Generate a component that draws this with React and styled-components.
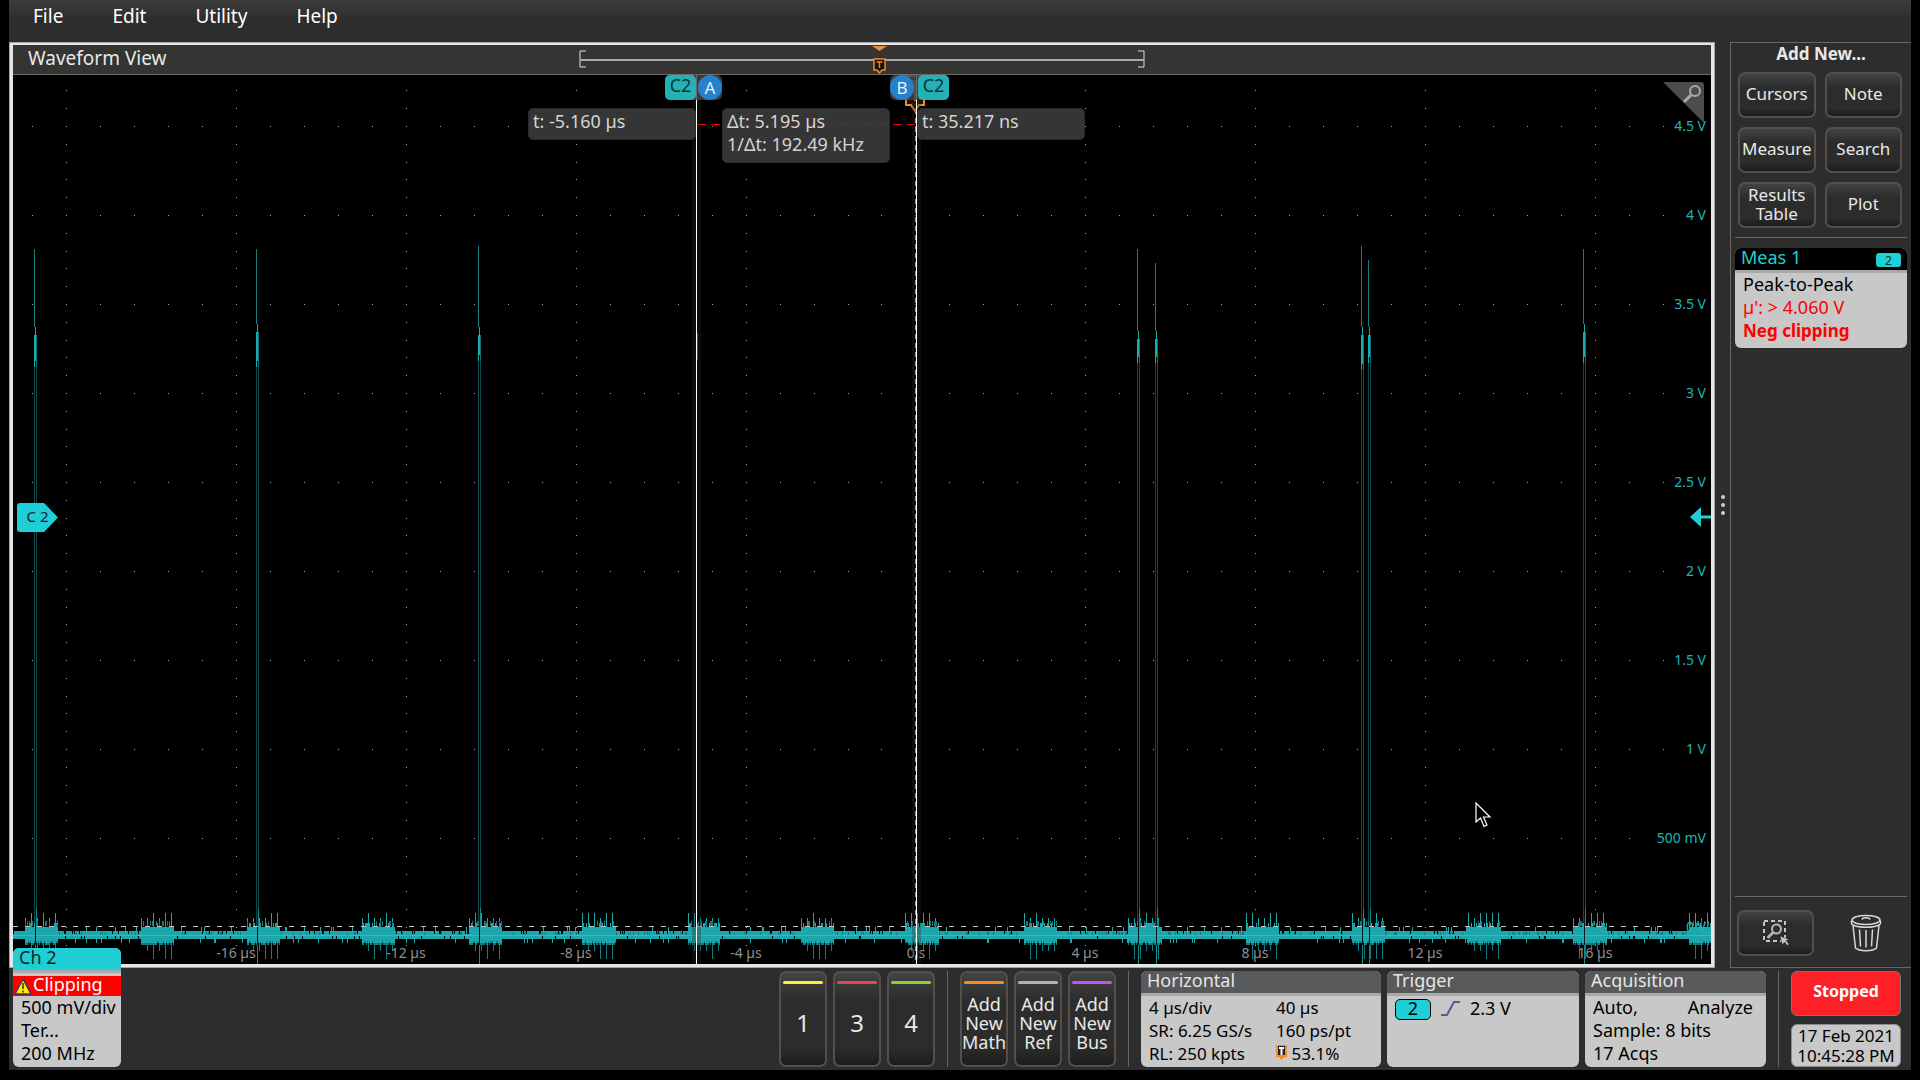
import { Fragment } from 'react';
import styled, { createGlobalStyle } from 'styled-components';

const GlobalStyle = createGlobalStyle`
  * {
    box-sizing: border-box;
  }

  body {
    margin: 0;
    background: #000;
    color: #e8e8e8;
    font-family: 'Noto Sans', 'Open Sans', sans-serif;
    font-size: 18px;
  }

  button {
    font: inherit;
    color: inherit;
    margin: 0;
    padding: 0;
    border: none;
    background: none;
    cursor: pointer;
  }
`;

const TEAL = '#1fb3b7';
const CYAN = '#20cfd5';
const ORANGE = '#f58a1f';

/* ---------- page ---------- */

const Screen = styled.div`
  min-height: 100vh;
  padding: 0 9px 10px;
  display: flex;
  background: #000;
`;

const Scope = styled.div`
  flex: 1;
  min-width: 0;
  display: flex;
  flex-direction: column;
  background: #2d2d2d;
`;

const MenuBar = styled.nav`
  height: 42px;
  padding-left: 24px;
  display: flex;
  align-items: flex-start;
  gap: 49px;
  background: linear-gradient(#3c3c3c, #2d2d2d 20px);
`;

const MenuItem = styled.button`
  color: #fff;
  font-size: 19px;
  line-height: 32px;
`;

const Middle = styled.main`
  flex: 1;
  display: flex;
`;

/* ---------- waveform view ---------- */

const ViewFrame = styled.section`
  flex: 1;
  min-width: 0;
  display: flex;
  flex-direction: column;
  border: 1px solid #a4a4a6;
  padding: 2px 3px 3px;
  background: #e6e6e8;
`;

const TitleBar = styled.header`
  height: 30px;
  padding: 0 15px;
  display: grid;
  grid-template-columns: 1fr auto 1fr;
  background: #343432;
  border-bottom: 1px solid #6c6c6a;
`;

const ViewTitle = styled.h1`
  margin: 0;
  font-size: 19px;
  font-weight: 400;
  line-height: 26px;
`;

const Plot = styled.div`
  flex: 1;
  position: relative;
  overflow: hidden;
  background: #000;
`;

const Trace = styled.svg`
  position: absolute;
  inset: 0;
  width: 100%;
  height: 100%;
`;

const VoltLabel = styled.span`
  position: absolute;
  right: 5px;
  color: ${TEAL};
  font-size: 14px;
  line-height: 20px;
  margin-top: -10px;
`;

const TimeLabel = styled.span`
  position: absolute;
  bottom: 1px;
  width: 80px;
  margin-left: -40px;
  text-align: center;
  color: #909090;
  font-size: 14px;
  line-height: 20px;
`;

const ChannelHandle = styled.div`
  position: absolute;
  left: 4px;
  width: 41px;
  height: 29px;
  margin-top: -15px;
  text-align: center;
  color: #06282a;
  font-size: 15px;
  line-height: 27px;
  background: ${CYAN};
  border-radius: 3px;
  clip-path: polygon(0 0, 66% 0, 100% 50%, 66% 100%, 0 100%);
`;

const LevelArrow = styled.svg`
  position: absolute;
  right: 0;
  margin-top: -10px;
`;

const CornerZoom = styled.button`
  position: absolute;
  top: 7px;
  right: 7px;
  width: 41px;
  height: 41px;
  display: flex;
`;

const TriggerMarker = styled.svg`
  position: absolute;
  top: 0;
  margin-left: -11px;
`;

const CursorLine = styled.div`
  position: absolute;
  top: 0;
  bottom: 0;
  width: 1px;
  background: #fff;
  box-shadow: 0 0 0 4px rgba(40, 40, 40, 0.3);
`;

const CursorTag = styled.div`
  position: absolute;
  top: 0;
  ${(props) => (props.$flip ? 'left: -26px;' : 'right: -25px;')}
  display: flex;
  flex-direction: ${(props) => (props.$flip ? 'row-reverse' : 'row')};
  gap: ${(props) => (props.$flip ? '4px' : '2px')};
  border-radius: 5px;
  background: rgba(70, 70, 70, 0.8);
`;

const SourceBadge = styled.span`
  width: 31px;
  height: 25px;
  border-radius: 5px;
  background: #24b1b6;
  color: #053638;
  text-align: center;
  line-height: 21px;
`;

const CursorName = styled.span`
  width: 24px;
  height: 25px;
  border-radius: 12px;
  background: #2680cc;
  color: #e6f1fa;
  text-align: center;
  font-size: 17px;
  line-height: 25px;
`;

const Readout = styled.div`
  position: absolute;
  top: 33px;
  width: 168px;
  padding: 1px 4px 6px;
  border: 1px solid #2a2a2a;
  border-radius: 5px;
  background: rgba(60, 60, 60, 0.88);
  color: #d4d4d4;
  font-size: 18px;
  line-height: 23px;
  white-space: nowrap;
  ${(props) => props.$side === 'left' && 'right: 1px;'}
  ${(props) => props.$side === 'right' && 'left: 1px;'}
  ${(props) => props.$side === 'between' && 'left: 26px;'}
`;

const MousePointer = styled.svg`
  position: absolute;
`;

/* ---------- side panel ---------- */

const Splitter = styled.div`
  width: 15px;
  display: flex;
  flex-direction: column;
  align-items: center;
  justify-content: center;
  gap: 4px;
`;

const Grip = styled.i`
  width: 4px;
  height: 4px;
  border-radius: 2px;
  background: #d0d0d0;
`;

const SidePanel = styled.aside`
  width: 181px;
  padding: 0 4px;
  display: flex;
  flex-direction: column;
  border: 1px solid #6a6664;
  border-right: none;
`;

const PanelTitle = styled.h2`
  margin: 0 0 7px;
  font-size: 17px;
  line-height: 22px;
  text-align: center;
`;

const AddGrid = styled.div`
  padding: 0 5px 0 3px;
  display: grid;
  grid-template-columns: 1fr 1fr;
  gap: 9px;
`;

const BevelButton = styled.button`
  height: 46px;
  display: flex;
  align-items: center;
  justify-content: center;
  border: 2px solid #554e4b;
  border-radius: 7px;
  background: linear-gradient(#424444, #2c2c2c 30%, #2c2c2c 80%, #1c1c1c);
  font-size: 17px;
  line-height: 19px;
  padding-bottom: 3px;
`;

const PanelRule = styled.hr`
  width: 100%;
  margin: ${(props) => (props.$bottom ? 'auto 0 13px' : '9px 0 10px')};
  border: none;
  border-top: 1px solid #6f6662;
`;

const PanelFooter = styled.div`
  padding: 0 2px 11px;
  display: flex;
  align-items: center;
  gap: 36px;
`;

const ZoomButton = styled(BevelButton)`
  width: 77px;
`;

const TrashButton = styled.button`
  display: flex;
`;

/* ---------- cards ---------- */

const Card = styled.section`
  width: ${(props) => props.$width};
  height: ${(props) => props.$height};
  border-radius: 6px;
  overflow: hidden;
  background: #c8c8c8;
  color: #000;
  white-space: nowrap;
`;

const CardHead = styled.header`
  height: 25px;
  padding: 0 6px;
  display: flex;
  justify-content: space-between;
  background: ${(props) => props.$bg};
  color: ${(props) => props.$color};
  border-bottom: 3px solid #a9a9a9;
  line-height: 18px;
`;

const CardBody = styled.div`
  padding: 0 8px;
  font-size: ${(props) => (props.$dense ? '17px' : '18px')};
  line-height: 23px;
`;

const MeasBadge = styled.span`
  width: 25px;
  height: 14px;
  margin-top: 5px;
  border-radius: 3px;
  background: ${CYAN};
  color: #04383a;
  text-align: center;
  font-size: 12px;
  line-height: 15px;
`;

const Alarm = styled.div`
  color: #f00;
`;

const StrongAlarm = styled(Alarm)`
  font-size: 17px;
  font-weight: 700;
`;

const ClipWarning = styled.div`
  height: 20px;
  margin-top: 3px;
  padding-left: 1px;
  display: flex;
  gap: 1px;
  background: #f00;
  color: #fff;
  line-height: 16px;

  svg {
    margin-top: 2px;
  }
`;

const TwoColumns = styled.div`
  display: grid;
  grid-template-columns: 127px 1fr;
`;

const Spread = styled.div`
  padding-right: 5px;
  display: flex;
  justify-content: space-between;
`;

const TriggerRow = styled.div`
  display: flex;
  align-items: center;
  gap: 10px;
`;

const TriggerBadge = styled.span`
  width: 36px;
  height: 21px;
  margin-top: 3px;
  border: 1px solid #000;
  border-radius: 5px;
  background: ${CYAN};
  text-align: center;
  line-height: 16px;
`;

/* ---------- bottom bar ---------- */

const BottomBar = styled.footer`
  height: 102px;
  padding: 3px 10px 3px 4px;
  display: flex;
  gap: 12px;
`;

const ChannelSlot = styled.div`
  position: relative;
  margin: -23px auto 0 0;
`;

const Group = styled.div`
  display: flex;
  gap: 6px;
`;

const Divider = styled.i`
  width: 1px;
  background: #6f6662;
`;

const AddButton = styled(BevelButton)`
  position: relative;
  width: 48px;
  height: 96px;
  padding: ${(props) => (props.$big ? '6px 0 0' : '9px 0 0')};
  font-size: ${(props) => (props.$big ? '24px' : '18px')};

  &::before {
    content: '';
    position: absolute;
    top: 8px;
    left: 2px;
    right: 2px;
    height: 3px;
    border-radius: 2px;
    background: ${(props) => props.$color};
  }
`;

const StatusColumn = styled.div`
  width: 110px;
  display: flex;
  flex-direction: column;
  gap: 8px;
`;

const StoppedButton = styled.button`
  height: 45px;
  padding-bottom: 4px;
  border: 1px solid #777;
  border-radius: 6px;
  background: #ff2027;
  color: #fff;
  font-size: 16px;
  font-weight: 700;
`;

const DateBox = styled.div`
  height: 44px;
  padding-top: 1px;
  border: 1px solid #8c8c8c;
  border-radius: 6px;
  background: #c8c8c8;
  color: #000;
  text-align: center;
  font-size: 17px;
  line-height: 20px;
  white-space: nowrap;
`;

/* ---------- data ---------- */

// plot units: 1698 x 889, just under 170 per horizontal division, 89 per vertical one
const W = 1698;
const H = 889;
const ZERO = 851;

const columnX = (i) => Math.round(53 + i * 169.9);
const rowY = (i) => 51 + i * 89;

const VOLTS = ['4.5 V', '4 V', '3.5 V', '3 V', '2.5 V', '2 V', '1.5 V', '1 V', '500 mV', '0 V'];
const TIMES = ['-20 µs', '-16 µs', '-12 µs', '-8 µs', '-4 µs', '0 s', '4 µs', '8 µs', '12 µs', '16 µs'];

const BURSTS = [
  [12, 44], [128, 160], [234, 266], [349, 381], [456, 488], [569, 602],
  [675, 706], [788, 820], [892, 925], [1011, 1043], [1115, 1148],
  [1233, 1265], [1339, 1371], [1455, 1487], [1560, 1593], [1676, 1698],
];

const PULSES = [
  { x: 21, top: 174, hi: 252, lo: 292 },
  { x: 243, top: 174, hi: 249, lo: 292 },
  { x: 465, top: 171, hi: 252, lo: 286 },
  { x: 1124, top: 174, hi: 256, lo: 288 },
  { x: 1142, top: 188, hi: 256, lo: 288 },
  { x: 1348, top: 171, hi: 252, lo: 295 },
  { x: 1355, top: 185, hi: 252, lo: 288 },
  { x: 1570, top: 174, hi: 249, lo: 288 },
];

function buildNoise() {
  let seed = 7;
  const rand = () => {
    seed = (seed * 16807) % 2147483647;
    return seed / 2147483647;
  };
  let body = '';
  let dark = '';
  for (let x = 0; x < W; x++) {
    const burst = BURSTS.find(([a, b]) => x >= a && x <= b);
    const r = rand();
    const s = rand();
    if (burst) {
      const step = (x - burst[0]) % 6;
      let top = r < 0.3 ? 848 : 852;
      let bottom = s < 0.4 ? 866 : 870;
      if (step === 0) top = r < 0.5 ? 838 : 843;
      if (step === 0 && x > burst[0] + 2) bottom = s < 0.5 ? 884 : 876;
      body += `M${x} ${top}V868`;
      dark += `M${x} 868V${bottom}`;
      if (step === 0) body += `M${x} 867V${bottom}`;
      if (r > 0.8) dark += `M${x} 846V851`;
    } else {
      body += `M${x} ${r < 0.08 ? 859 : 856}V${s < 0.04 ? 861 : 864}`;
      if (r > 0.95) body += `M${x} 852V857`;
      if (s > 0.94) body += `M${x} 864V868`;
      if (r > 0.45 && r < 0.6) dark += `M${x} 857V860`;
    }
  }
  return { body, dark };
}

const noise = buildNoise();

function buildGrid() {
  let d = '';
  for (let col = 0; col < 10; col++) {
    for (let k = -2; k <= 46; k++) {
      d += `M${columnX(col)} ${Math.round(51 + k * 17.8)}h1`;
    }
  }
  for (let row = 0; row < 9; row++) {
    for (let k = 0; k < 49; k++) {
      d += `M${Math.round(19 + k * 33.98)} ${rowY(row)}h1`;
    }
  }
  return d;
}

const grid = buildGrid();

const percent = (n, total) => `${(n / total) * 100}%`;

/* ---------- drawings ---------- */

function TimeOverview() {
  return (
    <svg width="566" height="29" viewBox="0 0 566 29" fill="none">
      <path d="M7 6H1V22H7M559 6H565V22H559" stroke="#e0e0e0" />
      <path d="M1 15H565" stroke="#a8a8a8" strokeWidth="2" />
      <path d="M293 1H308L300.500 6Z" fill={ORANGE} />
      <path d="M295 14H306V25H303L300.500 28L298 25H295Z" fill="#111" stroke={ORANGE} strokeWidth="1.500" />
      <path d="M297.500 17H303.500M300.500 17V23" stroke={ORANGE} strokeWidth="1.500" />
    </svg>
  );
}

function WaveTrace() {
  return (
    <Trace viewBox={`0 0 ${W} ${H}`} preserveAspectRatio="none" shapeRendering="crispEdges" fill="none">
      <g transform="translate(0 0.5)">
        <path d={grid} stroke="#a8a8a8" />
      </g>
      <g transform="translate(0.5 0)">
        {PULSES.map((p) => (
          <Fragment key={p.x}>
            <path d={`M${p.x} ${p.top}V${p.hi}`} stroke="#148084" />
            <path d={`M${p.x} ${p.lo}V${ZERO}M${p.x + 2} ${p.lo}V${ZERO}`} stroke="#0e484b" />
            <path d={`M${p.x} ${p.hi + 8}V${p.lo}M${p.x + 1} ${p.hi}V${p.lo - 6}`} stroke="#1aa9ad" />
            <path d={`M${p.x + 2} ${p.hi + 8}V${p.lo}`} stroke="#127579" />
          </Fragment>
        ))}
        <path d="M684 258V285" stroke="#127579" />
        <path d={noise.body} stroke="#1ba7ab" />
        <path d={noise.dark} stroke="#137c80" />
        <path d={`M0 860.500H${W}`} stroke="#22c3c8" />
        {PULSES.map((p) => (
          <Fragment key={p.x}>
            <path d={`M${p.x + 1} 840V870`} stroke="#021718" />
            <path d={`M${p.x + 2} 833V852M${p.x + 1} 870V${H}`} stroke="#148a8e" />
          </Fragment>
        ))}
      </g>
      <path d={`M0 ${ZERO + 0.5}H1655`} stroke="#c4c4c4" strokeDasharray="5 7" />
      <path d="M684 49.500H902" stroke="#f00" strokeDasharray="9 5" />
      <path d={`M902.500 34V${H}`} stroke="#d0d0d0" strokeDasharray="5 4" />
    </Trace>
  );
}

function TriggerIcon() {
  return (
    <svg width="11" height="15" viewBox="0 0 11 15">
      <path d="M0 0H11V12H8L5.500 15L3 12H0Z" fill={ORANGE} />
      <rect x="2" y="1" width="7" height="9" fill="#222" />
      <path d="M3 3H8M5.500 3V10" stroke="#fff" strokeWidth="2" />
    </svg>
  );
}

function WarningIcon() {
  return (
    <svg width="18" height="17" viewBox="0 0 18 17">
      <path d="M9 1L17 16H1Z" fill="#ffee00" stroke="#3b3360" strokeWidth="1.500" strokeLinejoin="round" />
      <path d="M9 5V11M9 12.500V14.500" stroke="#6b5d00" strokeWidth="2" />
    </svg>
  );
}

function ZoomAreaIcon() {
  return (
    <svg width="28" height="28" viewBox="0 0 28 28" fill="none">
      <rect x="2" y="3" width="21" height="20" stroke="#c4c4c4" strokeWidth="2" strokeDasharray="4 3" />
      <circle cx="14.500" cy="11" r="4.500" stroke="#b4b4b4" strokeWidth="2" />
      <path d="M11 14.500L6.500 19" stroke="#b4b4b4" strokeWidth="3" strokeLinecap="round" />
      <path d="M18 18L27 21.500L24 22.500L27 26L25.500 27.500L22.500 24L20.500 27Z" fill="#c8c8c8" stroke="#2c2c2c" strokeWidth="0.500" />
    </svg>
  );
}

function TrashIcon() {
  return (
    <svg width="32" height="38" viewBox="0 0 32 38" fill="none" stroke="#d8d8d8" strokeWidth="1.500">
      <ellipse cx="16" cy="6" rx="14" ry="4.500" />
      <path d="M1.500 6.500C1 10 1.500 10 3 11C9 14 23 14 29 11C30.500 10 31 10 30.500 6.500" />
      <path d="M3 11.500L5.500 34C9 37.500 23 37.500 26.500 34L29 11.500" />
      <path d="M9.500 15.500L10.500 32.500M16 16V33.500M22.500 15.500L21.500 32.500" />
      <path d="M12 5.500C12.500 3 19.500 3 20 5.500" />
    </svg>
  );
}

/* ---------- sections ---------- */

function WaveformView() {
  return (
    <ViewFrame>
      <TitleBar>
        <ViewTitle>Waveform View</ViewTitle>
        <TimeOverview />
      </TitleBar>
      <Plot>
        <WaveTrace />
        {VOLTS.map((label, i) => (
          <VoltLabel key={label} style={{ top: percent(rowY(i), H) }}>{label}</VoltLabel>
        ))}
        {TIMES.map((label, i) => (
          <TimeLabel key={label} style={{ left: percent(columnX(i), W) }}>{label}</TimeLabel>
        ))}
        <ChannelHandle style={{ top: percent(443, H) }}>C 2</ChannelHandle>
        <LevelArrow width="21" height="20" viewBox="0 0 21 20" style={{ top: percent(442, H) }}>
          <path d="M0 10L11 0V20ZM11 8.500H21V11.500H11Z" fill={CYAN} />
        </LevelArrow>
        <CornerZoom aria-label="Zoom">
          <svg width="41" height="41" viewBox="0 0 41 41" fill="none">
            <path d="M0 0H38Q41 0 41 3V41Z" fill="#4c4c4c" />
            <circle cx="32" cy="9" r="5" stroke="#a8a8a8" strokeWidth="2" />
            <path d="M28 13L21 20" stroke="#a8a8a8" strokeWidth="3" />
          </svg>
        </CornerZoom>
        <TriggerMarker width="22" height="38" viewBox="0 0 22 38" style={{ left: percent(902, W) }}>
          <path d="M2 1H20V30H15L11 36L7 30H2Z" fill="#1a120a" stroke={ORANGE} strokeWidth="2" />
          <path d="M5 6H17M11 6V26" stroke={ORANGE} strokeWidth="2" />
        </TriggerMarker>
        <CursorLine style={{ left: percent(683, W) }}>
          <CursorTag>
            <SourceBadge>C2</SourceBadge>
            <CursorName>A</CursorName>
          </CursorTag>
          <Readout $side="left">t: -5.160 µs</Readout>
          <Readout $side="between">
            Δt: 5.195 µs
            <br />
            1/Δt: 192.49 kHz
          </Readout>
        </CursorLine>
        <CursorLine style={{ left: percent(903, W) }}>
          <CursorTag $flip>
            <SourceBadge>C2</SourceBadge>
            <CursorName>B</CursorName>
          </CursorTag>
          <Readout $side="right">t: 35.217 ns</Readout>
        </CursorLine>
        <MousePointer
          width="18"
          height="28"
          viewBox="0 0 18 28"
          style={{ left: percent(1462, W), top: percent(726, H) }}
        >
          <path
            d="M1 2V21L5.500 17L9 25.500L12 24L8.500 16H15Z"
            fill="#000"
            stroke="#fff"
            strokeWidth="1.200"
          />
        </MousePointer>
      </Plot>
    </ViewFrame>
  );
}

function AddNewPanel() {
  return (
    <SidePanel>
      <PanelTitle>Add New...</PanelTitle>
      <AddGrid>
        <BevelButton>Cursors</BevelButton>
        <BevelButton>Note</BevelButton>
        <BevelButton>Measure</BevelButton>
        <BevelButton>Search</BevelButton>
        <BevelButton>
          Results
          <br />
          Table
        </BevelButton>
        <BevelButton>Plot</BevelButton>
      </AddGrid>
      <PanelRule />
      <Card $width="auto" $height="100px">
        <CardHead $bg="#000" $color={CYAN}>
          Meas 1
          <MeasBadge>2</MeasBadge>
        </CardHead>
        <CardBody>
          <div>Peak-to-Peak</div>
          <Alarm>µ': &gt; 4.060 V</Alarm>
          <StrongAlarm>Neg clipping</StrongAlarm>
        </CardBody>
      </Card>
      <PanelRule $bottom />
      <PanelFooter>
        <ZoomButton aria-label="Zoom area">
          <ZoomAreaIcon />
        </ZoomButton>
        <TrashButton aria-label="Delete">
          <TrashIcon />
        </TrashButton>
      </PanelFooter>
    </SidePanel>
  );
}

function Settings() {
  return (
    <BottomBar>
      <ChannelSlot>
        <Card $width="108px" $height="119px">
          <CardHead $bg={CYAN} $color="#04282a">Ch 2</CardHead>
          <ClipWarning>
            <WarningIcon />
            <span>Clipping</span>
          </ClipWarning>
          <CardBody>
            <div>500 mV/div</div>
            <div>Ter...</div>
            <div>200 MHz</div>
          </CardBody>
        </Card>
      </ChannelSlot>
      <Group>
        <AddButton $big $color="#ffee32">1</AddButton>
        <AddButton $big $color="#e8435a">3</AddButton>
        <AddButton $big $color="#8fce2c">4</AddButton>
      </Group>
      <Divider />
      <Group>
        <AddButton $color="#f58a1f">Add<br />New<br />Math</AddButton>
        <AddButton $color="#aeb2c4">Add<br />New<br />Ref</AddButton>
        <AddButton $color="#bb55f5">Add<br />New<br />Bus</AddButton>
      </Group>
      <Divider />
      <Group>
        <Card $width="240px" $height="96px">
          <CardHead $bg="#58595b" $color="#e6e6e6">Horizontal</CardHead>
          <CardBody $dense>
            <TwoColumns>
              <span>4 µs/div</span>
              <span>40 µs</span>
              <span>SR: 6.25 GS/s</span>
              <span>160 ps/pt</span>
              <span>RL: 250 kpts</span>
              <span><TriggerIcon /> 53.1%</span>
            </TwoColumns>
          </CardBody>
        </Card>
        <Card $width="192px" $height="96px">
          <CardHead $bg="#58595b" $color="#e6e6e6">Trigger</CardHead>
          <CardBody>
            <TriggerRow>
              <TriggerBadge>2</TriggerBadge>
              <svg width="19" height="15" viewBox="0 0 19 15" fill="none">
                <path d="M0 14H6L13 1H19" stroke="#5c5a90" strokeWidth="2" />
              </svg>
              2.3 V
            </TriggerRow>
          </CardBody>
        </Card>
        <Card $width="181px" $height="96px">
          <CardHead $bg="#58595b" $color="#e6e6e6">Acquisition</CardHead>
          <CardBody>
            <Spread>
              <span>Auto,</span>
              <span>Analyze</span>
            </Spread>
            <div>Sample: 8 bits</div>
            <div>17 Acqs</div>
          </CardBody>
        </Card>
      </Group>
      <Divider />
      <StatusColumn>
        <StoppedButton>Stopped</StoppedButton>
        <DateBox>
          17 Feb 2021
          <br />
          10:45:28 PM
        </DateBox>
      </StatusColumn>
    </BottomBar>
  );
}

export default function App() {
  return (
    <>
      <GlobalStyle />
      <Screen>
        <Scope>
          <MenuBar>
            <MenuItem>File</MenuItem>
            <MenuItem>Edit</MenuItem>
            <MenuItem>Utility</MenuItem>
            <MenuItem>Help</MenuItem>
          </MenuBar>
          <Middle>
            <WaveformView />
            <Splitter>
              <Grip />
              <Grip />
              <Grip />
            </Splitter>
            <AddNewPanel />
          </Middle>
          <Settings />
        </Scope>
      </Screen>
    </>
  );
}
